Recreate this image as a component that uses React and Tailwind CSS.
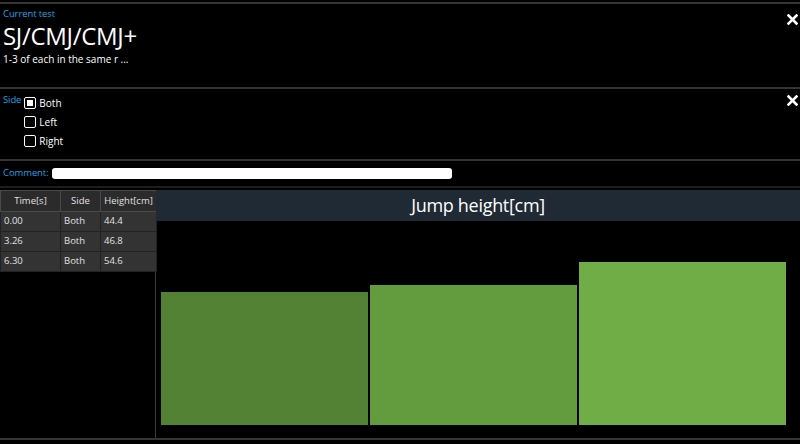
const rows = [
  { time: '0.00', side: 'Both', height: 44.4, color: '#548235' },
  { time: '3.26', side: 'Both', height: 46.8, color: '#629c3f' },
  { time: '6.30', side: 'Both', height: 54.6, color: '#70ad47' },
];

function CloseX() {
  return (
    <svg width="11" height="11" viewBox="0 0 11 11" className="shrink-0">
      <path d="M1.5 1.5 L9.5 9.5 M9.5 1.5 L1.5 9.5" stroke="#fff" strokeWidth="2.6" strokeLinecap="square" />
    </svg>
  );
}

function Check({ checked, label }) {
  return (
    <div className="flex items-center gap-[3px] h-[19px]">
      <span className="w-[12px] h-[12px] rounded-[2px] border-[1.5px] border-white flex items-center justify-center">
        {checked && <span className="w-[6px] h-[6px] bg-white" />}
      </span>
      <span className="text-[10px] text-white leading-none">{label}</span>
    </div>
  );
}

export default function App() {
  return (
    <div
      className="w-[800px] h-[444px] bg-black overflow-hidden flex flex-col"
      style={{ fontFamily: '"Open Sans", "Noto Sans", sans-serif' }}
    >
      {/* ── Current test ─────────────────── */}
      <div className="mt-[2px] border-t-2 border-[#343434] h-[85px] flex justify-between pl-[3px] pr-[2px]">
        <div className="pt-[4px]">
          <p className="text-[9.5px] text-[#1ba1e2] leading-[12px] tracking-[-0.1px]">Current test</p>
          <p className="text-[24px] text-white leading-[32px] tracking-[-0.3px]">SJ/CMJ/CMJ+</p>
          <p className="text-[10px] text-white leading-[14px]">1-3 of each in the same r ...</p>
        </div>
        <div className="pt-[10px]">
          <CloseX />
        </div>
      </div>

      {/* ── Side ─────────────────────────── */}
      <div className="border-t-2 border-[#343434] h-[72px] flex justify-between pl-[3px] pr-[2px]">
        <div className="flex gap-[3px] pt-[4px]">
          <span className="text-[9.5px] text-[#1ba1e2] leading-[14px] tracking-[-0.1px]">Side</span>
          <div className="flex flex-col">
            <Check checked label="Both" />
            <Check label="Left" />
            <Check label="Right" />
          </div>
        </div>
        <div className="pt-[6px]">
          <CloseX />
        </div>
      </div>

      {/* ── Comment ──────────────────────── */}
      <div className="border-t-2 border-[#343434] h-[27px] flex items-center gap-[3px] pl-[3px]">
        <span className="text-[9.5px] text-[#1ba1e2] tracking-[-0.1px]">Comment:</span>
        <div className="w-[400px] h-[11px] bg-white rounded-[3px]" />
      </div>

      {/* ── Results ──────────────────────── */}
      <div className="border-t-2 border-[#1c1c1c] flex-1 flex pt-[2px] border-b-2 border-b-[#343434] mb-[4px]">
        <div className="w-[156px] shrink-0 border-r border-[#3a3a3a]">
          <table className="w-[156px] border-collapse text-[9.5px] text-[#e0e0e0] table-fixed">
            <colgroup>
              <col className="w-[60px]" />
              <col className="w-[40px]" />
              <col className="w-[56px]" />
            </colgroup>
            <thead>
              <tr className="h-[21px] bg-[#2b2b2b]">
                <th className="font-normal border border-[#4a4a4a]">Time[s]</th>
                <th className="font-normal border border-[#4a4a4a]">Side</th>
                <th className="font-normal border border-[#4a4a4a]">Height[cm]</th>
              </tr>
            </thead>
            <tbody>
              {rows.map((r) => (
                <tr key={r.time} className="h-[20px] bg-[#333333]">
                  <td className="border border-[#222] pl-[3px]">{r.time}</td>
                  <td className="border border-[#222] pl-[3px]">{r.side}</td>
                  <td className="border border-[#222] pl-[3px]">{r.height.toFixed(1)}</td>
                </tr>
              ))}
            </tbody>
          </table>
        </div>

        <div className="flex-1 flex flex-col">
          <div className="h-[31px] bg-[#1f2a34] flex items-center justify-center">
            <span className="text-[18px] text-white tracking-[-0.3px]">Jump height[cm]</span>
          </div>
          <div className="flex-1 flex items-end gap-[2px] pl-[5px] pr-[14px] pb-[13px]">
            {rows.map((r) => (
              <div
                key={r.time}
                className="flex-1"
                style={{ height: `${Math.round(r.height * 2.985)}px`, backgroundColor: r.color }}
              />
            ))}
          </div>
        </div>
      </div>
    </div>
  );
}
